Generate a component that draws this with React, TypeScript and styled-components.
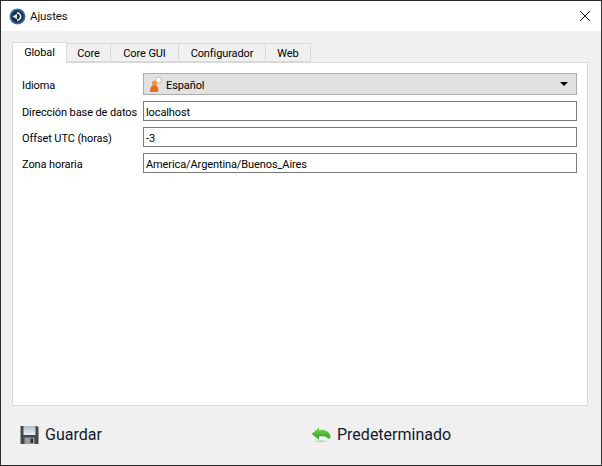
import React from 'react';
import styled, { createGlobalStyle } from 'styled-components';

const GlobalStyle = createGlobalStyle`
  html, body {
    margin: 0;
    padding: 0;
    background: #f0f0f0;
  }
  * {
    box-sizing: border-box;
  }
`;

const Win = styled.div`
  width: 602px;
  height: 466px;
  display: flex;
  flex-direction: column;
  background: #f0f0f0;
  border: 1px solid #2b2b2b;
  border-right-color: #3a3a3a;
  font-family: 'Roboto', 'Liberation Sans', sans-serif;
  font-size: 11px;
  letter-spacing: -0.1px;
  color: #000;
  overflow: hidden;
`;

const TitleBar = styled.div`
  height: 30px;
  flex: none;
  background: #fff;
  display: flex;
  align-items: center;
  padding: 0 10px 0 8px;
  gap: 4px;
`;

const TitleText = styled.span`
  flex: 1;
  font-size: 11.5px;
  color: #111;
`;

const Body = styled.div`
  flex: 1;
  display: flex;
  flex-direction: column;
  padding: 11px 13px 0 11px;
`;

const TabBar = styled.div`
  display: flex;
  align-items: flex-end;
  height: 20px;
  flex: none;
  position: relative;
  z-index: 1;
`;

const Tab = styled.div<{ $active?: boolean; $w: number }>`
  width: ${(p) => p.$w}px;
  height: ${(p) => (p.$active ? 21 : 19)}px;
  margin-bottom: ${(p) => (p.$active ? -1 : 0)}px;
  padding: ${(p) => (p.$active ? '0 0 1px' : '2px 0 0')};
  display: flex;
  align-items: center;
  justify-content: center;
  background: ${(p) => (p.$active ? '#fff' : '#f0f0f0')};
  border: 1px solid #d9d9d9;
  border-left-width: ${(p) => (p.$active ? 1 : 0)}px;
  border-bottom-width: ${(p) => (p.$active ? 0 : 1)}px;
`;

const Pane = styled.div`
  height: 344px;
  flex: none;
  background: #fff;
  border: 1px solid #d9d9d9;
  padding: 10px 10px 0 9px;
  display: flex;
  flex-direction: column;
  gap: 6px;
`;

const Row = styled.div`
  display: grid;
  grid-template-columns: 121px 1fr;
  align-items: center;
`;

const Label = styled.span`
  white-space: nowrap;
  padding-top: 2px;
`;

const Field = styled.div`
  height: 20px;
  border: 1px solid #7a7a7a;
  background: #fff;
  padding: 2px 2px 0;
  display: flex;
  align-items: center;
`;

const Combo = styled.div`
  height: 22px;
  border: 1px solid #adadad;
  background: #e1e1e1;
  padding: 0 8px 0 4px;
  display: flex;
  align-items: center;
  gap: 2px;
`;

const ComboText = styled.span`
  flex: 1;
  padding-top: 2px;
`;

const Caret = styled.span`
  width: 0;
  height: 0;
  border-left: 4px solid transparent;
  border-right: 4px solid transparent;
  border-top: 4px solid #000;
`;

const Footer = styled.div`
  flex: 1;
  display: grid;
  grid-template-columns: 291px 1fr;
  align-items: center;
  padding: 0 0 2px 8px;
`;

const ActionButton = styled.div`
  display: flex;
  align-items: center;
  gap: 6px;
  font-size: 16px;
  letter-spacing: 0;
  color: #14182e;
`;

const LogoIcon = () => (
  <svg width="17" height="17" viewBox="0 0 17 17">
    <defs>
      <radialGradient id="logoRing" cx="0.5" cy="0.5" r="0.5">
        <stop offset="0.65" stopColor="#1c2a42" />
        <stop offset="1" stopColor="#4a86cf" />
      </radialGradient>
    </defs>
    <circle cx="8.5" cy="8.5" r="8" fill="url(#logoRing)" />
    <path
      d="M8 4.9 A3.7 3.7 0 1 1 8 12.3"
      stroke="#dfe6ee"
      strokeWidth="1.7"
      fill="none"
    />
    <path d="M3.5 8.5 L8 5.7 V11.3 Z" fill="#dfe6ee" />
  </svg>
);

const CloseIcon = () => (
  <svg width="12" height="12" viewBox="0 0 12 12">
    <path d="M1 1 L11 11 M11 1 L1 11" stroke="#111" strokeWidth="1" fill="none" />
  </svg>
);

const PersonIcon = () => (
  <svg width="16" height="17" viewBox="0 0 16 17">
    <circle cx="10.5" cy="4" r="3" fill="#fff" stroke="#cfa98e" strokeWidth="0.9" />
    <circle cx="6.5" cy="7" r="2.6" fill="#f29448" />
    <path d="M2 16 C1.8 11 3.4 9.3 6.5 9.3 C9.6 9.3 10.6 11.5 10.2 16 Z" fill="#ea6f1d" />
  </svg>
);

const SaveIcon = () => (
  <svg width="19" height="20" viewBox="0 0 19 20">
    <defs>
      <linearGradient id="saveLabel" x1="0" y1="0" x2="0" y2="1">
        <stop offset="0" stopColor="#aebccb" />
        <stop offset="1" stopColor="#eef2f6" />
      </linearGradient>
    </defs>
    <path d="M0.5 1 H17 L18.5 2.5 V19 H0.5 Z" fill="#45494d" />
    <rect x="3.5" y="1" width="12" height="9" fill="url(#saveLabel)" />
    <rect x="4.5" y="12.5" width="10" height="6.5" fill="#9a9ea3" />
    <rect x="10.5" y="13.5" width="2.5" height="4.5" fill="#2f3235" />
  </svg>
);

const UndoIcon = () => (
  <svg width="20" height="17" viewBox="0 0 20 17">
    <defs>
      <linearGradient id="undoFill" x1="0" y1="0" x2="0" y2="1">
        <stop offset="0" stopColor="#7ddb55" />
        <stop offset="1" stopColor="#2a9a1e" />
      </linearGradient>
      <radialGradient id="undoShade" cx="0.5" cy="0.5" r="0.5">
        <stop offset="0" stopColor="#9fd592" />
        <stop offset="1" stopColor="#eef5ec" />
      </radialGradient>
    </defs>
    <ellipse cx="10" cy="15.2" rx="8.5" ry="1.6" fill="url(#undoShade)" />
    <path
      d="M0.5 8 L8 1.5 V4.5 C13 3 19 5 19.5 11 C19 13 17 13 16 11.5 C14.5 9.8 11 10 8 10.5 V13.5 Z"
      fill="url(#undoFill)"
    />
  </svg>
);

const fields = [
  { label: 'Dirección base de datos', value: 'localhost' },
  { label: 'Offset UTC (horas)', value: '-3' },
  { label: 'Zona horaria', value: 'America/Argentina/Buenos_Aires' },
];

const tabs = [
  { name: 'Global', w: 55, active: true },
  { name: 'Core', w: 44 },
  { name: 'Core GUI', w: 68 },
  { name: 'Configurador', w: 87 },
  { name: 'Web', w: 45 },
];

export default function App() {
  return (
    <>
      <GlobalStyle />
      <Win>
        <TitleBar>
          <LogoIcon />
          <TitleText>Ajustes</TitleText>
          <CloseIcon />
        </TitleBar>
        <Body>
          <TabBar>
            {tabs.map((t) => (
              <Tab key={t.name} $active={t.active} $w={t.w}>
                {t.name}
              </Tab>
            ))}
          </TabBar>
          <Pane>
            <Row>
              <Label>Idioma</Label>
              <Combo>
                <PersonIcon />
                <ComboText>Español</ComboText>
                <Caret />
              </Combo>
            </Row>
            {fields.map((f) => (
              <Row key={f.label}>
                <Label>{f.label}</Label>
                <Field>{f.value}</Field>
              </Row>
            ))}
          </Pane>
          <Footer>
            <ActionButton>
              <SaveIcon />
              Guardar
            </ActionButton>
            <ActionButton>
              <UndoIcon />
              Predeterminado
            </ActionButton>
          </Footer>
        </Body>
      </Win>
    </>
  );
}
